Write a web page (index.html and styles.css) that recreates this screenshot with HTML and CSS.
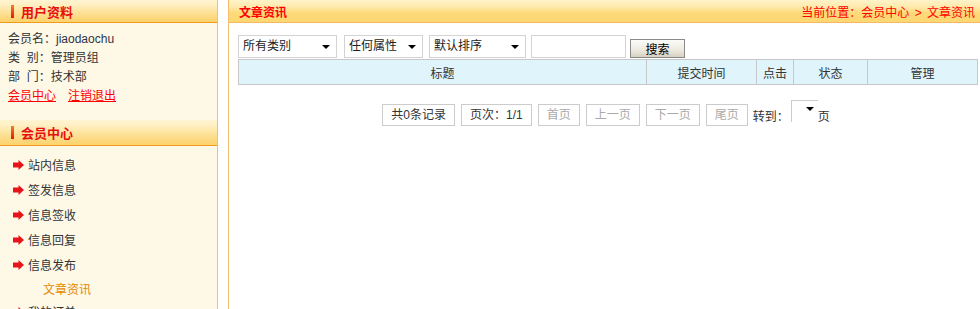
FILE: index.html
```html
<!DOCTYPE html>
<html lang="zh-CN">
<head>
    <meta charset="UTF-8">
    <title>文章资讯</title>
    <link rel="stylesheet" href="styles.css">
</head>
<body>
    <div class="page">
        <div class="side">
            <div class="side-head first"><span class="bar"></span>用户资料</div>
            <div class="user-info">
                <p>会员名：<span class="uname">jiaodaochu</span></p>
                <p>类&nbsp;&nbsp;别：管理员组</p>
                <p>部&nbsp;&nbsp;门：技术部</p>
                <p><a href="#">会员中心</a><a href="#" class="logout">注销退出</a></p>
            </div>
            <div class="side-head"><span class="bar"></span>会员中心</div>
            <ul class="menu">
                <li><span class="arrow"><svg width="11" height="10" viewBox="0 0 11 10"><polygon points="0,2.5 5.5,2.5 5.5,0 11,5 5.5,10 5.5,7.5 0,7.5" fill="#e8141a"/></svg></span>站内信息</li>
                <li><span class="arrow"><svg width="11" height="10" viewBox="0 0 11 10"><polygon points="0,2.5 5.5,2.5 5.5,0 11,5 5.5,10 5.5,7.5 0,7.5" fill="#e8141a"/></svg></span>签发信息</li>
                <li><span class="arrow"><svg width="11" height="10" viewBox="0 0 11 10"><polygon points="0,2.5 5.5,2.5 5.5,0 11,5 5.5,10 5.5,7.5 0,7.5" fill="#e8141a"/></svg></span>信息签收</li>
                <li><span class="arrow"><svg width="11" height="10" viewBox="0 0 11 10"><polygon points="0,2.5 5.5,2.5 5.5,0 11,5 5.5,10 5.5,7.5 0,7.5" fill="#e8141a"/></svg></span>信息回复</li>
                <li><span class="arrow"><svg width="11" height="10" viewBox="0 0 11 10"><polygon points="0,2.5 5.5,2.5 5.5,0 11,5 5.5,10 5.5,7.5 0,7.5" fill="#e8141a"/></svg></span>信息发布</li>
                <li class="sub">文章资讯</li>
                <li><span class="arrow"><svg width="11" height="10" viewBox="0 0 11 10"><polygon points="0,2.5 5.5,2.5 5.5,0 11,5 5.5,10 5.5,7.5 0,7.5" fill="#e8141a"/></svg></span>我的订单</li>
            </ul>
        </div>

        <div class="main">
            <div class="main-head">
                <span class="main-title">文章资讯</span>
                <span class="crumb">当前位置：会员中心 &gt; 文章资讯</span>
            </div>
            <div class="content">
                <div class="filters">
                    <span class="sel w1">所有类别</span>
                    <span class="sel w2">任何属性</span>
                    <span class="sel w3">默认排序</span>
                    <input type="text" class="keyword">
                    <button class="search">搜索</button>
                </div>
                <table class="list">
                    <tr>
                        <th class="c1">标题</th>
                        <th class="c2">提交时间</th>
                        <th class="c3">点击</th>
                        <th class="c4">状态</th>
                        <th class="c5">管理</th>
                    </tr>
                </table>
                <div class="pager">
                    <span class="pg">共0条记录</span>
                    <span class="pg">页次：1/1</span>
                    <span class="pg off">首页</span>
                    <span class="pg off">上一页</span>
                    <span class="pg off">下一页</span>
                    <span class="pg off">尾页</span>
                    <span class="goto">转到：</span>
                    <span class="jump"></span>
                    <span>页</span>
                </div>
            </div>
        </div>
    </div>
</body>
</html>
```
FILE: styles.css
```css
body {
    margin: 0;
    padding: 0;
    font-family: "Liberation Sans", "Noto Sans CJK SC", sans-serif;
    font-size: 12px;
    color: #333;
    background-color: #fff;
}

.page {
    display: flex;
    height: 309px;
    overflow: hidden;
}

.side {
    width: 217px;
    flex: none;
    background-color: #fef8e7;
    border-right: 1px solid #f6be6c;
}

.side-head {
    display: flex;
    align-items: center;
    height: 25px;
    padding-left: 11px;
    font-size: 13px;
    font-weight: bold;
    color: #e60f0f;
    background: linear-gradient(#fff4d2 0%, #fff0c4 20%, #fde29a 55%, #fcd26a 100%);
    border-bottom: 1px solid #f09a1e;
}

.side-head.first {
    height: 22px;
}

.bar {
    width: 3px;
    height: 13px;
    margin-right: 7px;
    background: linear-gradient(#f3801f, #e41616);
}

.user-info {
    padding: 7px 0 14px 8px;
}

.user-info p {
    margin: 0;
    line-height: 19px;
}

.uname {
    color: #2e3448;
}

.user-info a {
    color: #f00;
}

.user-info a.logout {
    margin-left: 12px;
}

.menu {
    list-style: none;
    margin: 0;
    padding: 6px 0 0 13px;
}

.menu li {
    display: flex;
    align-items: center;
    height: 25px;
}

.menu li.sub {
    height: 22px;
    padding-left: 30px;
    color: #e58a00;
}

.arrow {
    display: flex;
    width: 15px;
    padding-top: 1px;
}

.main {
    flex: 1;
    margin-left: 10px;
    border-left: 1px solid #f6be6c;
}

.main-head {
    display: flex;
    justify-content: space-between;
    align-items: center;
    height: 22px;
    padding: 0 5px 0 10px;
    color: #f00;
    background: linear-gradient(#fff3c8 0%, #feeaae 30%, #fdd978 60%, #fcd773 100%);
    border-bottom: 1px solid #f5b95e;
}

.main-title {
    font-weight: bold;
}

.crumb {
    word-spacing: 2px;
}

.content {
    padding: 12px 0 0 9px;
}

.filters {
    display: flex;
    align-items: flex-end;
    height: 23px;
}

.sel {
    position: relative;
    box-sizing: border-box;
    height: 23px;
    line-height: 21px;
    padding-left: 4px;
    margin-right: 6px;
    background: #fff;
    border: 1px solid #d3d3d3;
    color: #222;
}

.sel::after {
    content: "";
    position: absolute;
    right: 6px;
    top: 9px;
    border-left: 4px solid transparent;
    border-right: 4px solid transparent;
    border-top: 4px solid #000;
}

.w1 { width: 99px; margin-right: 7px; }
.w2 { width: 79px; }
.w3 { width: 97px; margin-right: 5px; }

.keyword {
    box-sizing: border-box;
    width: 95px;
    height: 23px;
    margin: 0 4px 0 0;
    border: 1px solid #d3d3d3;
}

.search {
    box-sizing: border-box;
    width: 55px;
    height: 19px;
    padding: 0;
    font-family: "Noto Sans CJK SC", sans-serif;
    font-size: 12px;
    line-height: 17px;
    color: #000;
    border: 1px solid #8a8a8a;
    background: linear-gradient(#fbfbf8, #ece9df 60%, #d6d0c0);
}

.list {
    width: 740px;
    border-collapse: collapse;
    margin-top: 1px;
}

.list th {
    height: 24px;
    padding: 0;
    font-weight: normal;
    color: #333;
    background-color: #e0f4fb;
    border: 1px solid #c8c8c8;
}

.c1 { width: 407px; }
.c2 { width: 109px; }
.c3 { width: 36px; }
.c4 { width: 73px; }

.pager {
    display: flex;
    align-items: center;
    justify-content: center;
    width: 740px;
    margin-top: 19px;
    margin-left: -2px;
}

.pg {
    box-sizing: border-box;
    height: 22px;
    line-height: 20px;
    padding: 0 8px;
    margin-right: 6px;
    border: 1px solid #ccc;
    color: #333;
}

.pg.off {
    color: #aaa;
}

.goto {
    margin-left: -1px;
}

.jump {
    position: relative;
    box-sizing: border-box;
    width: 27px;
    height: 22px;
    margin: -8px 0 0 2px;
    background: #fff;
    border-top: 1px solid #ccc;
    border-left: 1px solid #ccc;
}

.jump::after {
    content: "";
    position: absolute;
    right: 4px;
    top: 6px;
    border-left: 4px solid transparent;
    border-right: 4px solid transparent;
    border-top: 4px solid #000;
}
```
